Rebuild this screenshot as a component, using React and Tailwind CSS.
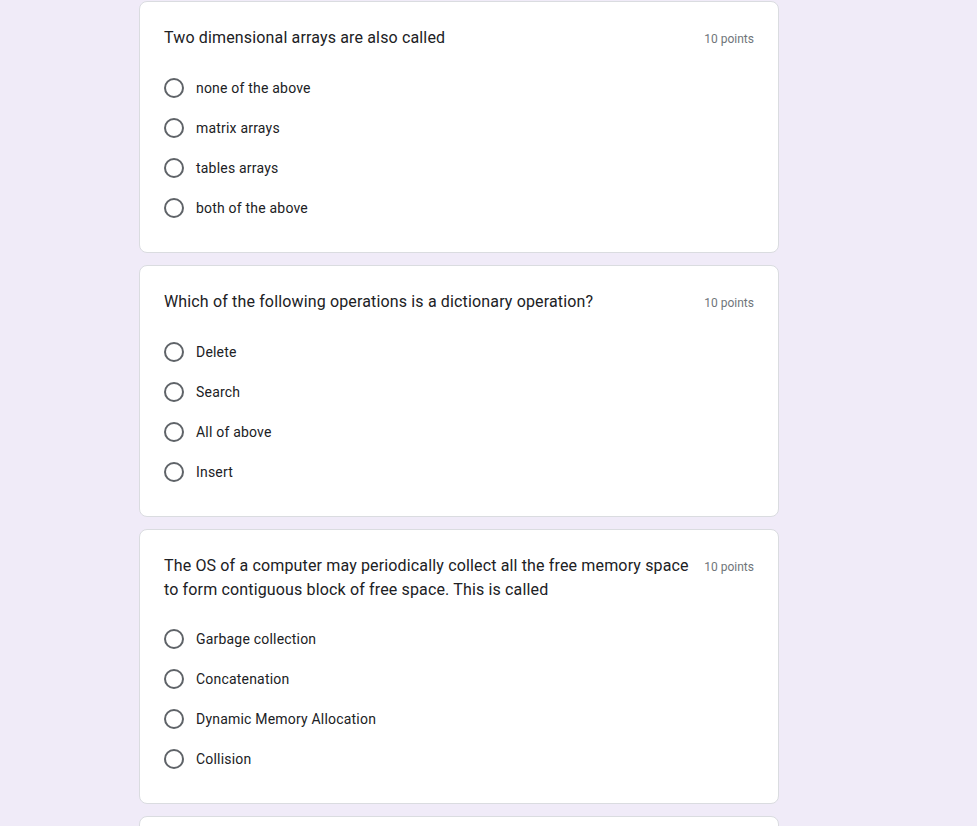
const questions = [
  {
    title: "Two dimensional arrays are also called",
    options: ["none of the above", "matrix arrays", "tables arrays", "both of the above"],
  },
  {
    title: "Which of the following operations is a dictionary operation?",
    options: ["Delete", "Search", "All of above", "Insert"],
  },
  {
    title:
      "The OS of a computer may periodically collect all the free memory space to form contiguous block of free space. This is called",
    options: ["Garbage collection", "Concatenation", "Dynamic Memory Allocation", "Collision"],
  },
];

function Radio({ label }) {
  return (
    <label className="flex items-center h-10 cursor-pointer">
      <span className="w-5 h-5 rounded-full border-2 border-[#5f6368] shrink-0" />
      <span className="ml-3 text-[14px] leading-5 tracking-[0.2px] text-[#202124] font-['Roboto',sans-serif]">
        {label}
      </span>
    </label>
  );
}

function QuestionCard({ title, options }) {
  return (
    <div className="bg-white border border-[#dadce0] rounded-lg p-6">
      <div className="flex items-start justify-between gap-[11px]">
        <div className="text-[16px] leading-6 text-[#202124] font-['Roboto',sans-serif] tracking-[0.15px]">
          {title}
        </div>
        <div className="shrink-0 pt-px text-[12px] leading-6 text-[#70757a] font-['Roboto',sans-serif]">
          10 points
        </div>
      </div>
      <div className="mt-[17px] flex flex-col">
        {options.map((o) => (
          <Radio key={o} label={o} />
        ))}
      </div>
    </div>
  );
}

export default function App() {
  return (
    <div className="min-h-screen bg-[#f0ebf8] pt-px">
      <div className="w-[640px] ml-[139px] flex flex-col gap-3">
        {questions.map((q) => (
          <QuestionCard key={q.title} {...q} />
        ))}
        <div className="bg-white border border-[#dadce0] rounded-lg h-24" />
      </div>
    </div>
  );
}
